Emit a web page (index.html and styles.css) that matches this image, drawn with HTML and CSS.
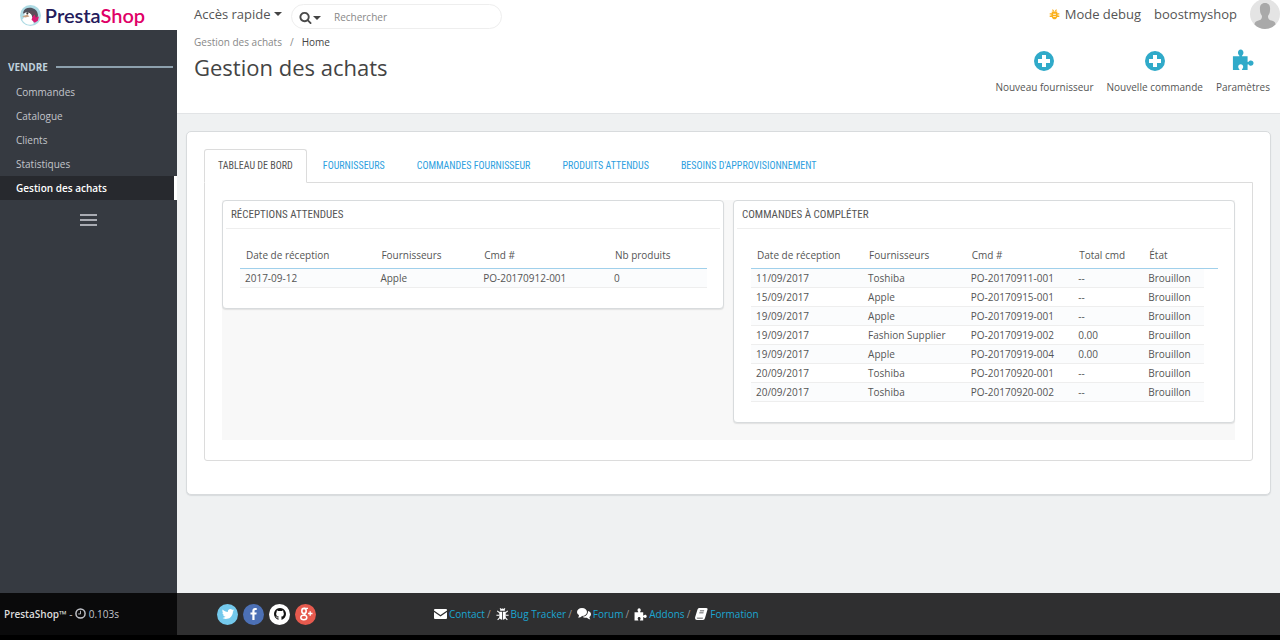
FILE: index.html
```html
<!DOCTYPE html>
<html lang="fr">
<head>
<meta charset="utf-8">
<title>Gestion des achats</title>
<link rel="stylesheet" href="styles.css">
</head>
<body>
<svg class="sprite" aria-hidden="true">
  <symbol id="puzzle" viewBox="0 0 24 24"><path d="M1 8h6.500c.6 0 .8-.5.400-1C7.200 6.200 6.500 5.300 6.500 4c0-2 1.200-3.500 3-3.500s3 1.500 3 3.500c0 1.300-.7 2.200-1.400 3-.4.500-.2 1 .4 1H17v5.500c0 .7.500.9 1 .4.800-.8 1.500-1.400 2.600-1.400 1.700 0 2.900 1.200 2.900 2.900s-1.200 2.900-2.900 2.900c-1.100 0-1.800-.6-2.600-1.400-.5-.5-1-.3-1 .4V23h-5.500c-.6 0-.8-.4-.5-1 .7-.9 1.200-1.500 1.200-2.700 0-1.700-1.100-2.800-2.700-2.800s-2.700 1.100-2.700 2.800c0 1.200.5 1.800 1.200 2.700.3.600.1 1-.5 1H1z"/></symbol>
  <symbol id="plus" viewBox="0 0 20 20"><path fill-rule="evenodd" d="M10 0a10 10 0 1 0 0 20 10 10 0 0 0 0-20zM8 4h4v4h4v4h-4v4H8v-4H4V8h4z"/></symbol>
  <symbol id="bug" viewBox="0 0 16 16"><path d="M5 3.500a3 3 0 0 1 6 0z"/><path d="M4 4.500h3.500v10C5.500 14.300 4 12.500 4 10zM12 4.500H8.500v10c2-.2 3.500-2 3.500-4.500z"/><path d="M1.500 3.500 4.500 6M.5 9H4M2 14.500l3-3M14.500 3.500 11.500 6M15.500 9H12M14 14.500l-3-3M5 .5l1.500 2M11 .5l-1.500 2" fill="none" stroke="currentColor" stroke-width="1.300"/></symbol>
  <symbol id="beetle" viewBox="0 0 16 16"><path fill-rule="evenodd" d="M4 3.500h8V6h3v2h-2.500v1.500H15v2h-3C11 14 10 15 8 15s-3-1-4-3.500H1v-2h2.500V8H1V6h3zM6 7v1.200h4V7zM6 10v1.200h4V10z"/><path d="M5 1l2 2.500M11 1 9 3.500" stroke="currentColor" stroke-width="1.500"/></symbol>
</svg>
<div class="app">
  <aside class="sidebar">
    <a class="logo" href="#" aria-label="PrestaShop">
      <svg viewBox="0 0 20 20" width="21" height="21"><circle cx="10" cy="10" r="10" fill="#aedbe4"/><path d="M3 7c1-4 5-5 9-4 3 1 5 3 5 7l-5 2-4-4H3z" fill="#50515c"/><path d="M4 8c2-2 5-1 7 1l2 9c-4 2-9 0-11-4 2-2 3-3 2-6z" fill="#fff"/><path d="M8 7c3-3 8-1 9 3 0 3-1 5-3 6-1-4-2-7-6-9z" fill="#5c4d58"/><path d="M2 11l5-2 2 2-4 1z" fill="#c9a183"/><path d="M12 11l2-2 1 3 3-1-1 4-3 2-3-3z" fill="#d91b72"/><circle cx="7" cy="8" r="1" fill="#333"/></svg>
      <span class="wordmark">Presta<span class="pink">Shop</span></span>
    </a>
    <nav class="menu">
      <h2 class="menu-title">VENDRE</h2>
      <a class="menu-link" href="#">Commandes</a>
      <a class="menu-link" href="#">Catalogue</a>
      <a class="menu-link" href="#">Clients</a>
      <a class="menu-link" href="#">Statistiques</a>
      <a class="menu-link current" href="#" aria-current="page">Gestion des achats</a>
      <button class="collapse" type="button" aria-label="Réduire le menu"><svg viewBox="0 0 17 12" width="17" height="12"><path d="M0 1h17M0 6h17M0 11h17" stroke="#a9abb2" stroke-width="2"/></svg></button>
    </nav>
    <div class="version"><strong>PrestaShop™</strong> - <svg viewBox="0 0 12 12" width="11" height="11"><circle cx="6" cy="6" r="5" fill="none" stroke="currentColor" stroke-width="1.600"/><path d="M6 3v3.500H3.500" fill="none" stroke="currentColor"/></svg> 0.103s</div>
  </aside>
  <div class="page">
    <header class="header">
      <div class="topbar">
        <button class="quick" type="button">Accès rapide <span class="caret"></span></button>
        <form class="search">
          <button class="search-kind" type="button" aria-label="Rechercher partout"><svg viewBox="0 0 1792 1792" width="13" height="13"><path fill="#4a4a4a" d="M1216 832q0-185-131.500-316.500t-316.500-131.500-316.500 131.500-131.500 316.500 131.500 316.500 316.500 131.500 316.500-131.500 131.500-316.500zm512 832q0 52-38 90t-90 38q-54 0-90-38l-343-342q-179 124-399 124-143 0-273.500-55.500t-225-150-150-225-55.500-273.500 55.500-273.500 150-225 225-150 273.500-55.500 273.500 55.500 225 150 150 225 55.500 273.500q0 220-124 399l343 343q37 37 37 90z"/></svg><span class="caret"></span></button>
          <input class="search-input" type="text" placeholder="Rechercher" aria-label="Rechercher">
        </form>
        <div class="account">
          <a class="debug" href="#"><svg class="bug-icon" width="11" height="11"><use href="#beetle"/></svg>Mode debug</a>
          <a class="shop" href="#">boostmyshop</a>
          <a class="avatar" href="#" aria-label="Profil"><svg viewBox="0 0 30 30" width="30" height="30"><circle cx="15" cy="15" r="15" fill="#e4e4e4"/><path d="M15 4c4 0 5.500 3 5 7 0 3-1 4-2 6 0 4 2 4 5 5 2 .7 2.500 2 2.500 3.500A15 15 0 0 1 15 30a15 15 0 0 1-10.500-4.500C4.500 24 5 22.700 7 22c3-1 5-1 5-5-1-2-2-3-2-6-.5-4 1-7 5-7z" fill="#a9a9a9"/></svg></a>
        </div>
      </div>
      <div class="heading">
        <div class="titles">
          <nav class="crumbs"><a href="#">Gestion des achats</a><span class="sep">/</span><span class="here">Home</span></nav>
          <h1 class="title">Gestion des achats</h1>
        </div>
        <div class="actions">
          <a class="action" href="#"><svg width="20" height="20"><use href="#plus"/></svg>Nouveau fournisseur</a>
          <a class="action" href="#"><svg width="20" height="20"><use href="#plus"/></svg>Nouvelle commande</a>
          <a class="action" href="#"><svg class="wide" width="24" height="22"><use href="#puzzle"/></svg>Paramètres</a>
        </div>
      </div>
    </header>
    <main class="main">
      <section class="card">
        <nav class="tabs">
          <a class="tab active" href="#">TABLEAU DE BORD</a>
          <a class="tab" href="#">FOURNISSEURS</a>
          <a class="tab" href="#">COMMANDES FOURNISSEUR</a>
          <a class="tab" href="#">PRODUITS ATTENDUS</a>
          <a class="tab" href="#">BESOINS D'APPROVISIONNEMENT</a>
        </nav>
        <div class="tab-body">
          <div class="panels">
            <section class="panel">
              <h2 class="panel-title">RÉCEPTIONS ATTENDUES</h2>
              <table class="grid">
                <colgroup><col class="w29"><col class="w22"><col class="w28"><col></colgroup>
                <thead><tr><th>Date de réception</th><th>Fournisseurs</th><th>Cmd #</th><th>Nb produits</th></tr></thead>
                <tbody><tr><td>2017-09-12</td><td>Apple</td><td>PO-20170912-001</td><td>0</td></tr></tbody>
              </table>
            </section>
            <section class="panel">
              <h2 class="panel-title">COMMANDES À COMPLÉTER</h2>
              <table class="grid">
                <colgroup><col class="w24"><col class="w22"><col class="w23"><col class="w15"><col><col class="w3"></colgroup>
                <thead><tr><th>Date de réception</th><th>Fournisseurs</th><th>Cmd #</th><th>Total cmd</th><th colspan="2">État</th></tr></thead>
                <tbody>
                  <tr><td>11/09/2017</td><td>Toshiba</td><td>PO-20170911-001</td><td>--</td><td>Brouillon</td></tr>
                  <tr><td>15/09/2017</td><td>Apple</td><td>PO-20170915-001</td><td>--</td><td>Brouillon</td></tr>
                  <tr><td>19/09/2017</td><td>Apple</td><td>PO-20170919-001</td><td>--</td><td>Brouillon</td></tr>
                  <tr><td>19/09/2017</td><td>Fashion Supplier</td><td>PO-20170919-002</td><td>0.00</td><td>Brouillon</td></tr>
                  <tr><td>19/09/2017</td><td>Apple</td><td>PO-20170919-004</td><td>0.00</td><td>Brouillon</td></tr>
                  <tr><td>20/09/2017</td><td>Toshiba</td><td>PO-20170920-001</td><td>--</td><td>Brouillon</td></tr>
                  <tr><td>20/09/2017</td><td>Toshiba</td><td>PO-20170920-002</td><td>--</td><td>Brouillon</td></tr>
                </tbody>
              </table>
            </section>
          </div>
        </div>
      </section>
    </main>
    <footer class="footer">
      <div class="social">
        <a class="disc twitter" href="#" aria-label="Twitter"><svg viewBox="0 0 1792 1792" width="14" height="14"><path d="M1684 408q-67 98-162 167 1 14 1 42 0 130-38 259.500t-115.500 248.500-184.500 210.500-258 146-323 54.500q-271 0-496-145 35 4 78 4 225 0 401-138-105-2-188-64.500t-114-159.500q33 5 61 5 43 0 85-11-112-23-185.500-111.500t-73.500-205.500v-4q68 38 146 41-66-44-105-115t-39-154q0-88 44-163 121 149 294.500 238.500t371.500 99.500q-8-38-8-74 0-134 94.500-228.500t228.500-94.500q140 0 236 102 109-21 205-78-37 115-142 178 93-10 186-50z"/></svg></a>
        <a class="disc facebook" href="#" aria-label="Facebook"><svg viewBox="0 0 1792 1792" width="13" height="13"><path d="M1343 12v264h-157q-86 0-116 36t-30 108v189h293l-39 296h-254v759h-306v-759h-255v-296h255v-218q0-186 104-288.500t277-102.500q147 0 228 12z"/></svg></a>
        <a class="disc github" href="#" aria-label="GitHub"><svg viewBox="0 0 1792 1792" width="14" height="14"><path d="M896 128q209 0 385.500 103t279.500 279.500 103 385.500q0 251-146.500 451.500t-378.500 277.500q-27 5-40-7t-13-30q0-3 .5-76.500t.5-134.500q0-97-52-142 57-6 102.500-18t94-39 81-66.500 53-105 20.500-150.500q0-119-79-206 37-91-8-204-28-9-81 11t-92 44l-38 24q-93-26-192-26t-192 26q-16-11-42.500-27t-83.500-38.500-85-13.500q-45 113-8 204-79 87-79 206 0 85 20.500 150t52.500 105 80.500 67 94 39 102.500 18q-39 36-49 103-21 10-45 15t-57 5-65.500-21.500-55.500-62.500q-19-32-48.500-52t-49.500-24l-20-3q-21 0-29 4.500t-5 11.500 9 14 13 12l7 5q22 10 43.500 38t31.500 51l10 23q13 38 44 61.500t67 30 69.500 7 55.500-3.500l23-4q0 38 .5 88.500t.5 54.500q0 18-13 30t-40 7q-232-77-378.500-277.500t-146.500-451.500q0-209 103-385.500t279.500-279.500 385.500-103z"/></svg></a>
        <a class="disc google" href="#" aria-label="Google+"><svg viewBox="0 0 14 14" width="14" height="14"><g fill="none" stroke="#fff"><ellipse cx="5" cy="4" rx="2.200" ry="2.600" stroke-width="1.600"/><ellipse cx="4.800" cy="10.500" rx="3" ry="2.200" stroke-width="1.500"/><path d="M5 1.300h4M5 6.600l1.500 2" stroke-width="1.300"/><path d="M9 6.500h4.500M11.200 4.200v4.500" stroke-width="1.300"/></g></svg></a>
      </div>
      <nav class="help">
        <svg viewBox="0 0 13 10" width="13" height="10"><path d="M0 1.500V1q0-1 1-1h11q1 0 1 1v.5L6.500 6zM0 3l6.500 4.500L13 3v6q0 1-1 1H1q-1 0-1-1z"/></svg><a href="#">Contact</a><span class="slash">/</span>
        <svg width="13" height="13"><use href="#bug"/></svg><a href="#">Bug Tracker</a><span class="slash">/</span>
        <svg viewBox="0 0 14 12" width="14" height="12"><path d="M5 0c3 0 5 1.700 5 4S8 8 5 8c-1 1-2 1.500-4 1.500Q2 8.500 2 7.200C1 6.500 0 5.500 0 4c0-2.300 2-4 5-4z"/><path d="M11 3c2 .5 3 1.700 3 3.200 0 1.300-.6 2-1.600 2.700q0 1.300 1 2.300c-1.600 0-2.700-.6-3.500-1.500-2 .2-3.400-.2-4.400-1C9 8.500 11 6.500 11 3z"/></svg><a href="#">Forum</a><span class="slash">/</span>
        <svg width="13" height="13"><use href="#puzzle"/></svg><a href="#">Addons</a><span class="slash">/</span>
        <svg viewBox="0 0 13 12" width="13" height="12"><path fill-rule="evenodd" d="M4 0h7q2 0 1.500 1.500L10 10q-.4 2-2 2H2Q-.5 12 .2 9L2.500 1.500Q3 0 4 0zM5 2.500l-.2.700H9l.2-.7zM4.400 4.500l-.2.700h4.200l.2-.7zM1.800 9.700q-.3.800.7.800h5.200l.3-.8z"/></svg><a href="#">Formation</a>
      </nav>
    </footer>
  </div>
</div>
</body>
</html>
```
FILE: styles.css
```css
* { box-sizing: border-box; }
body { margin: 0; background: #000; color: #555; font: 10px/16px "Open Sans", sans-serif; }
a { color: inherit; text-decoration: none; }
button { border: 0; padding: 0; background: none; color: inherit; font: inherit; cursor: pointer; }
h1, h2 { margin: 0; font-weight: 400; }
.sprite { display: none; }

.app { display: flex; min-height: 100vh; padding-bottom: 5px; }
.sidebar { display: flex; flex: 0 0 177px; flex-direction: column; background: #363a41; color: #c3c5cb; }
.page { display: flex; flex: 1; flex-direction: column; min-width: 0; background: #eff1f2; }

.logo { display: flex; align-items: center; justify-content: center; gap: 4px; height: 30px; padding-right: 12px; background: #fff; }
.wordmark { color: #251b5b; font: 600 20px/24px Lato, sans-serif; }
.pink { color: #df0067; }
.menu { display: flex; flex: 1; flex-direction: column; padding-top: 24px; }
.menu-title { display: flex; align-items: center; gap: 8px; height: 26px; padding: 0 4px 0 8px; color: #bed0dc; font-size: 10px; font-weight: 700; }
.menu-title::after { flex: 1; height: 2px; background: #8da0ad; content: ""; }
.menu-link { padding: 4px 16px; }
.current { border-right: 3px solid #fff; background: #27292e; color: #fff; font-weight: 600; }
.collapse { align-self: center; margin-top: 10px; padding: 4px; }
.version { padding: 13px 4px; background: #0a0a0b; line-height: 16px; }
.version strong { font-weight: 600; color: #dcdcdc; }
.version svg { vertical-align: -1px; }

.header { min-height: 114px; padding: 0 0 18px 17px; border-bottom: 1px solid #e2e4e6; background: #fff; }
.topbar { display: flex; align-items: flex-start; font-size: 13px; }
.quick { padding: 5px 0; line-height: 18px; }
.caret { display: inline-block; border: 4px solid transparent; border-top-color: #444; border-bottom: 0; vertical-align: 3px; }
.search { display: flex; flex: 0 0 211px; align-items: center; height: 25px; margin: 4px 0 0 9px; border: 1px solid #eee; border-radius: 13px; }
.search-kind { display: flex; align-items: center; gap: 1px; padding: 2px 7px 0; }
.search-input { flex: 1; min-width: 0; padding: 0 6px; border: 0; outline: 0; background: none; color: #555; font: 10px/16px "Open Sans", sans-serif; }
.search-input::placeholder { color: #888; opacity: 1; }
.account { display: flex; flex: 1; align-items: center; justify-content: flex-end; height: 30px; padding-bottom: 2px; }
.debug { display: flex; align-items: center; gap: 5px; margin-right: 13px; }
.bug-icon { color: #fbb01a; fill: #fbb01a; }
.shop { margin-right: 13px; }
.avatar { height: 30px; }
.heading { display: flex; justify-content: space-between; padding-right: 10px; }
.titles { padding-top: 5px; }
.crumbs { display: flex; gap: 8px; height: 14px; color: #888; line-height: 14px; }
.here { color: #444; }
.title { color: #444; font-size: 22px; line-height: 36px; }
.actions { display: flex; gap: 13px; padding-top: 21px; }
.action { display: flex; flex-direction: column; align-items: center; gap: 8px; }
.action svg { fill: #30aac9; }
.action .wide { margin-top: -2px; }

.main { flex: 1; padding: 17px 9px; }
.card { padding: 17px 17px 33px; border: 1px solid #d8dbdd; border-radius: 5px; background: #fff; box-shadow: 0 1px 1px #d8dbdd; }
.tabs { display: flex; color: #2e9fe0; font: 10px/32px "Ubuntu Condensed", "Roboto Condensed", sans-serif; }
.tab { margin-bottom: -1px; padding: 0 15px; border: 1px solid transparent; white-space: nowrap; }
.active { border-color: #dcdcdc; border-bottom-color: #fff; border-radius: 3px 3px 0 0; background: #fff; color: #555; padding: 0 13px; }
.tab-body { padding: 17px 17px 20px; border: 1px solid #dcdcdc; border-radius: 0 0 3px 3px; }
.panels { display: grid; grid-template-columns: 1fr 1fr; gap: 9px; align-items: start; padding-bottom: 17px; background: #f8f8f8; }
.panel { padding: 0 3px 20px; border: 1px solid #d8dbdd; border-radius: 4px; background: #fff; box-shadow: 0 1px 1px #e2e2e2; }
.panel-title { margin-bottom: 13px; padding: 0 5px; border-bottom: 1px solid #eee; font: 11px/27px "Ubuntu Condensed", "Roboto Condensed", sans-serif; }
.grid { width: calc(100% - 27px); margin-left: 14px; border-collapse: collapse; table-layout: fixed; }
.grid th { height: 26px; padding: 0 0 0 6px; border-bottom: 1px solid #a0d0eb; font-weight: 400; text-align: left; white-space: nowrap; }
.grid td { height: 19px; padding: 0 0 0 5px; border-bottom: 1px solid #eee; line-height: 18px; white-space: nowrap; }
.grid tbody tr:nth-child(odd) td { background: #fbfcfd; }
.w29 { width: 29%; } .w28 { width: 28%; } .w24 { width: 24%; } .w23 { width: 23%; }
.w22 { width: 22%; } .w15 { width: 15%; } .w3 { width: 3%; }

.footer { display: flex; align-items: center; gap: 118px; height: 42px; padding-left: 40px; background: #2f2f30; color: #bbb; }
.social { display: flex; gap: 5px; }
.disc { display: flex; align-items: center; justify-content: center; width: 21px; height: 21px; border-radius: 50%; fill: #fff; }
.twitter { background: #74c9ec; } .facebook { background: #4c70b5; } .github { background: #fff; fill: #111; } .google { background: #e65a4e; }
.help { display: flex; align-items: center; gap: 2px; color: #1ba6d2; }
.help svg { color: #fff; fill: #fff; }
.slash { margin-right: 3px; color: #999; }
```
